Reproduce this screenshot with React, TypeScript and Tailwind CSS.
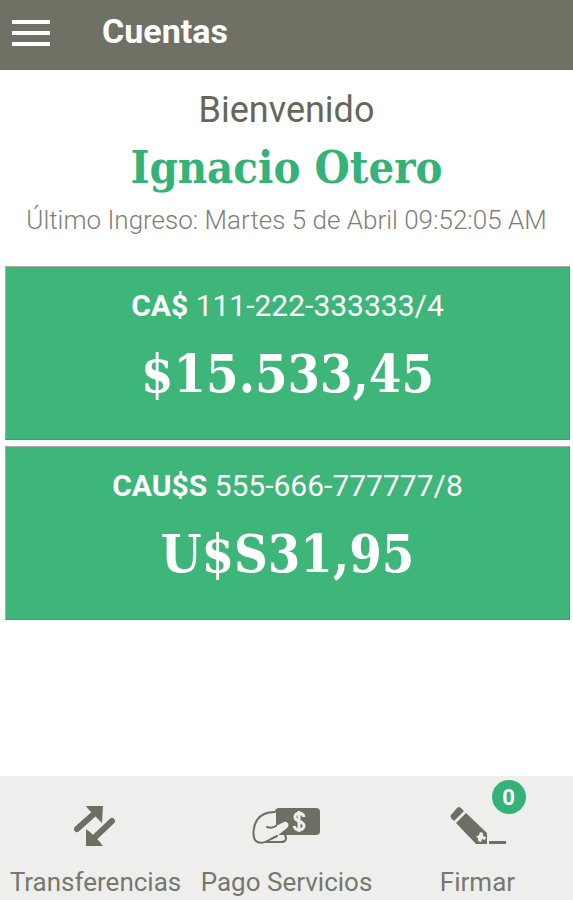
import React from 'react';

const accounts = [
  { type: 'CA$', number: '111-222-333333/4', balance: '$15.533,45' },
  { type: 'CAU$S', number: '555-666-777777/8', balance: 'U$S31,95' },
];

const TransferIcon: React.FC = () => (
  <svg viewBox="0 0 44 44" className="h-11 w-11" fill="#6e6f62" aria-hidden="true">
    <path d="M3 25 22 8M38 17 19 35" stroke="#6e6f62" strokeWidth="6" strokeLinecap="round" />
    <path d="M12 2H29L28 19 24 15 15 6Z" />
    <path d="M12 42V25L16 28 25 37 29 42Z" />
  </svg>
);

const PaymentIcon: React.FC = () => (
  <svg viewBox="0 0 72 44" className="h-11 w-18" fill="none" aria-hidden="true">
    <rect x="24" y="4" width="45" height="27" rx="4" fill="#6e6f62" />
    <path
      d="M25 8C18 8 10 10 6 16C2 22 1 33 5 37C9 41 15 38 20 35L26 32L36 24C39 21 37 17 33 18L25 22Z"
      fill="#eeeeed"
    />
    <path
      d="M24 8C18 8 10 10 6 16C2 22 1 33 5 37C9 41 15 38 20 35L26 32M25 22C22 24 19 24 16 23M15 38H30C35 38 36 35 34 31"
      stroke="#6e6f62"
      strokeWidth="2"
      strokeLinecap="round"
      strokeLinejoin="round"
    />
    <path d="M53 13C52 8 44 8 44 13C44 19 53 16 53 22C53 27 44 27 43 22M48 7V28" stroke="#eeeeed" strokeWidth="3" />
  </svg>
);

const SignIcon: React.FC = () => (
  <svg viewBox="0 0 60 44" className="h-11 w-15" fill="#6e6f62" aria-hidden="true">
    <path d="M3 11 9 4Q11 2 13 4L16 7 6 17 3 14Q2 12 3 11Z" />
    <path d="M8 19 18 9 39 29V40H28Z" />
    <path d="M28 33 31 31 32 28 35 29V32L38 33 37 36 34 35 33 38 30 37V34Z" fill="#eeeeed" />
    <path d="M41 37H58V40H41Z" />
  </svg>
);

const actions = [
  { label: 'Transferencias', icon: <TransferIcon /> },
  { label: 'Pago Servicios', icon: <PaymentIcon /> },
  { label: 'Firmar', icon: <SignIcon />, badge: 0 },
];

const App: React.FC = () => {
  return (
    <div className="flex min-h-screen flex-col bg-white font-['Roboto',sans-serif]">
      {/* Header */}
      <header className="flex h-[70px] items-center gap-[52px] bg-[#707165] px-3 pb-2">
        <button type="button" aria-label="Menú" className="flex w-[38px] flex-col gap-[7px] pt-1">
          <span className="h-1 w-full bg-white" />
          <span className="h-1 w-full bg-white" />
          <span className="h-1 w-full bg-white" />
        </button>
        <h1 className="text-[34px] leading-10 font-bold text-white">Cuentas</h1>
      </header>

      <main className="flex-1">
        {/* Welcome */}
        <section className="pt-4 text-center">
          <p className="text-[36px] leading-12 text-[#66675b]">Bienvenido</p>
          <h2 className="font-['DejaVu_Serif_Condensed','DejaVu_Serif',serif] text-[45px] leading-[68px] font-bold text-[#35b277]">
            Ignacio Otero
          </h2>
          <p className="text-[26px] leading-9 font-light text-[#808077]">Último Ingreso: Martes 5 de Abril 09:52:05 AM</p>
        </section>

        {/* Accounts */}
        <section className="mt-7 flex flex-col gap-[6px] pr-[3px] pl-[5px]">
          {accounts.map((account) => (
            <button
              key={account.number}
              type="button"
              className="flex h-[174px] flex-col items-center border border-t-[#a5aaa2] border-r-[#807a78] border-b-[#807a78] border-l-[#a5aaa2] bg-[#3eb579] pt-[19px] text-white"
            >
              <span className="text-[30px] leading-10">
                <b>{account.type}</b> {account.number}
              </span>
              <span className="mt-3 font-['DejaVu_Serif_Condensed','DejaVu_Serif',serif] text-[52px] leading-[72px] font-bold">
                {account.balance}
              </span>
            </button>
          ))}
        </section>
      </main>

      {/* Bottom actions */}
      <nav className="grid h-[124px] grid-cols-3 bg-[#eeeeed]">
        {actions.map((action) => (
          <button key={action.label} type="button" className="relative flex flex-col items-center pt-7 text-[#77786d]">
            {action.icon}
            <span className="mt-4 text-[26px] leading-9 whitespace-nowrap">{action.label}</span>
            {action.badge !== undefined && (
              <span className="absolute top-1 left-1/2 ml-3.5 flex size-[34px] items-center justify-center rounded-full bg-[#35b277] text-[22px] font-bold text-white">
                {action.badge}
              </span>
            )}
          </button>
        ))}
      </nav>
    </div>
  );
};

export default App;
